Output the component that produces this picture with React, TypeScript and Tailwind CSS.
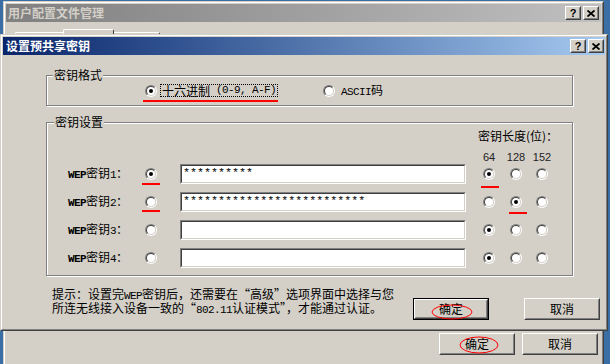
import React from "react";

const cjk = "font-['Noto_Sans_CJK_SC','Noto_Sans',sans-serif]";
const mono = "font-['Liberation_Mono',monospace] text-[11px] tracking-[-0.6px]";

function Radio({ checked }: { checked?: boolean }) {
  return (
    <span className="inline-flex w-[12px] h-[12px] shrink-0 rounded-full border border-t-[#808080] border-l-[#808080] border-b-white border-r-white">
      <span className="flex w-full h-full items-center justify-center rounded-full border border-t-[#404040] border-l-[#404040] border-b-[#d4d0c8] border-r-[#d4d0c8] bg-white">
        {checked && <span className="w-[4px] h-[4px] rounded-full bg-black" />}
      </span>
    </span>
  );
}

function Button({ children, primary, ring }: { children: React.ReactNode; primary?: boolean; ring?: string }) {
  const face = (
    <div className="w-full h-full border border-t-white border-l-white border-b-[#404040] border-r-[#404040]">
      <div className="relative flex w-full h-full items-center justify-center border border-t-[#d4d0c8] border-l-[#d4d0c8] border-b-[#808080] border-r-[#808080] bg-[#d4d0c8] text-[12px] leading-[12px] text-black">
        {children}
        {ring === "inner" && (
          <svg className="absolute left-[15px] top-[3px]" width="42" height="16">
            <ellipse cx="21" cy="8" rx="20" ry="7" fill="none" stroke="#ff0000" strokeWidth="1" />
          </svg>
        )}
        {ring === "outer" && (
          <svg className="absolute left-[18px] top-[1px]" width="40" height="18">
            <ellipse cx="20" cy="9" rx="19" ry="8" fill="none" stroke="#ff0000" strokeWidth="1" />
          </svg>
        )}
      </div>
    </div>
  );
  if (primary) {
    return <div className="w-[76px] h-[22px] border border-black">{face}</div>;
  }
  return <div className="w-[76px] h-[22px]">{face}</div>;
}

function CaptionButtons() {
  return (
    <div className="flex gap-[2px]">
      <div className="w-[16px] h-[14px] border border-t-white border-l-white border-b-[#404040] border-r-[#404040]">
        <div className="flex w-full h-full items-center justify-center border border-t-[#d4d0c8] border-l-[#d4d0c8] border-b-[#808080] border-r-[#808080] bg-[#d4d0c8] font-['Liberation_Sans',sans-serif] font-bold text-[11px] leading-[10px] text-black">
          ?
        </div>
      </div>
      <div className="w-[16px] h-[14px] border border-t-white border-l-white border-b-[#404040] border-r-[#404040]">
        <div className="flex w-full h-full items-center justify-center border border-t-[#d4d0c8] border-l-[#d4d0c8] border-b-[#808080] border-r-[#808080] bg-[#d4d0c8]">
          <svg width="8" height="7" viewBox="0 0 8 7">
            <path d="M0.5 0.5 L7.5 6.5 M7.5 0.5 L0.5 6.5" stroke="black" strokeWidth="1.8" />
          </svg>
        </div>
      </div>
    </div>
  );
}

function EditBox({ value }: { value?: string }) {
  return (
    <div className="w-[286px] h-[20px] border border-t-[#808080] border-l-[#808080] border-b-white border-r-white">
      <div className="w-full h-full border border-t-[#404040] border-l-[#404040] border-b-[#d4d0c8] border-r-[#d4d0c8] bg-white pl-[1px] font-['Liberation_Mono',monospace] text-[11.7px] leading-[14px] text-black">
        {value}
      </div>
    </div>
  );
}

const keys = [
  { n: "1", sel: true, value: "**********", len: 0, mark: "row1" },
  { n: "2", sel: false, value: "**************************", len: 1, mark: "row2" },
  { n: "3", sel: false, value: "", len: 0, mark: "" },
  { n: "4", sel: false, value: "", len: 0, mark: "" },
];

export default function App() {
  return (
    <div className={`relative w-[610px] h-[364px] overflow-hidden bg-[#3a6ea5] ${cjk} text-black`}>
      {/* background window */}
      <div className="absolute left-[3px] top-[1px] w-[601px] h-[380px] border border-t-[#d4d0c8] border-l-[#d4d0c8] border-b-[#404040] border-r-[#404040]">
        <div className="flex flex-col w-full h-full border border-t-white border-l-white border-b-[#808080] border-r-[#808080] bg-[#d4d0c8] p-[1px]">
          <div className="flex h-[18px] items-center justify-between bg-gradient-to-r from-[#808080] to-[#c0c0c0] pl-[2px] pr-[2px]">
            <span className="text-[12px] leading-[12px] font-bold text-[#d4d0c8]">用户配置文件管理</span>
            <CaptionButtons />
          </div>
          <div className="flex h-[30px] items-start pl-[9px]">
            <div className="mt-[10px] w-[48px] h-[20px] rounded-tl-[2px] border-t border-l border-t-white border-l-white" />
            <div className="mt-[7px] w-[51px] h-[22px] rounded-t-[2px] border-t border-l border-r border-t-white border-l-white border-r-[#404040]" />
            <div className="mt-[10px] w-[46px] h-[20px] rounded-tr-[2px] border-t border-r border-t-white border-r-[#404040]" />
          </div>
          <div className="mt-[281px] flex justify-end gap-[7px] pr-[3px]">
            <Button ring="outer">确定</Button>
            <Button>取消</Button>
          </div>
        </div>
      </div>

      {/* front dialog */}
      <div className="absolute left-0 top-[34px] w-[608px] h-[297px] border border-t-[#d4d0c8] border-l-[#d4d0c8] border-b-[#404040] border-r-[#404040]">
        <div className="flex flex-col w-full h-full border border-t-white border-l-white border-b-[#808080] border-r-[#808080] bg-[#d4d0c8] p-[1px]">
          <div className="flex h-[18px] shrink-0 items-center justify-between bg-gradient-to-r from-[#0a246a] to-[#a6caf0] pl-[3px] pr-[1px]">
            <span className="text-[12px] leading-[12px] font-bold text-white">设置预共享密钥</span>
            <CaptionButtons />
          </div>

          <div className="flex flex-col pl-[43px] pr-[5px] pt-[20px] text-[12px] leading-[12px]">
            {/* key format */}
            <div className="relative w-[527px] h-[31px] border border-[#808080] shadow-[inset_1px_1px_0_#fff,1px_1px_0_#fff]">
              <span className="absolute left-[6px] -top-[7px] bg-[#d4d0c8] px-[1px]">密钥格式</span>
              <div className="flex h-full items-center pl-[98px]">
                <div className="relative flex items-center">
                  <Radio checked />
                  <span className="ml-[3px] flex w-[118px] items-center border border-dotted border-black pl-[1px] leading-[11px] whitespace-nowrap">
                    十六进制<span className={`${mono} ml-[6px]`}>(0-9, A-F)</span>
                  </span>
                  <span className="absolute -left-[2px] top-[16px] w-[135px] h-[2px] bg-[#ff0000]" />
                </div>
                <div className="ml-[45px] flex items-center">
                  <Radio />
                  <span className="ml-[6px] whitespace-nowrap">
                    <span className={mono}>ASCII</span>码
                  </span>
                </div>
              </div>
            </div>

            {/* key settings */}
            <div className="relative mt-[16px] w-[527px] h-[154px] border border-[#808080] shadow-[inset_1px_1px_0_#fff,1px_1px_0_#fff]">
              <span className="absolute left-[7px] -top-[7px] bg-[#d4d0c8] px-[1px]">密钥设置</span>
              <div className="flex flex-col pt-[7px]">
                <div className="pl-[431px] h-[12px] whitespace-nowrap">密钥长度(位)：</div>
                <div className="mt-[9px] flex h-[12px] pl-[429px] font-['Liberation_Sans',sans-serif] text-[11px] text-[#222]">
                  <span className="w-[26px] text-center">64</span>
                  <span className="ml-[1px] w-[26px] text-center">128</span>
                  <span className="w-[26px] text-center">152</span>
                </div>
                <div className="mt-[1px] flex flex-col gap-[8px]">
                  {keys.map((k, i) => (
                    <div key={i} className="flex h-[20px] items-center">
                      <span className="w-[98px] pl-[21px] whitespace-nowrap">
                        <span className={`${mono} font-bold`}>WEP</span>密钥<span className={mono}>{k.n}</span>：
                      </span>
                      <div className="relative flex">
                        <Radio checked={k.sel} />
                        {k.mark === "row1" && <span className="absolute -left-[3px] top-[15px] w-[18px] h-[2px] bg-[#ff0000]" />}
                        {k.mark === "row2" && <span className="absolute -left-[3px] top-[14px] w-[18px] h-[2px] bg-[#ff0000]" />}
                      </div>
                      <div className="ml-[23px] self-start">
                        <EditBox value={k.value} />
                      </div>
                      <div className="ml-[10px] flex">
                        {[0, 1, 2].map((c) => (
                          <div key={c} className={`relative flex w-[26px] justify-center ${c === 1 ? "ml-[1px]" : ""}`}>
                            <Radio checked={k.len === c} />
                            {k.mark === "row1" && c === 0 && <span className="absolute left-[5px] top-[18px] w-[18px] h-[2px] bg-[#ff0000]" />}
                            {k.mark === "row2" && c === 1 && <span className="absolute left-[6px] top-[16px] w-[18px] h-[2px] bg-[#ff0000]" />}
                          </div>
                        ))}
                      </div>
                    </div>
                  ))}
                </div>
              </div>
            </div>

            {/* hint and buttons */}
            <div className="mt-[12px] flex">
              <div className="ml-[6px] w-[350px] leading-[12px] whitespace-nowrap">
                <div>
                  提示：设置完<span className={mono}>WEP</span>密钥后，还需要在“高级”选项界面中选择与您
                </div>
                <div>
                  所连无线接入设备一致的“<span className={mono}>802.11</span>认证模式”，才能通过认证。
                </div>
              </div>
              <div className="ml-auto flex gap-[35px] pt-[10px]">
                <Button primary ring="inner">确定</Button>
                <Button>取消</Button>
              </div>
            </div>
          </div>
        </div>
      </div>
    </div>
  );
}
